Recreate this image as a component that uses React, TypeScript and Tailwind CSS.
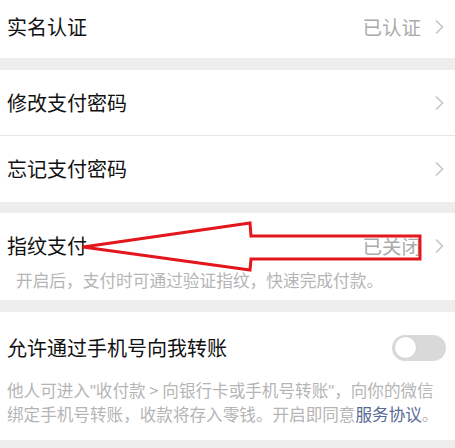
import React from 'react';

const font = { fontFamily: '"Noto Sans CJK SC", "Noto Sans", sans-serif' };
const latin = { fontFamily: '"Liberation Sans", sans-serif' };

function Chevron() {
  return (
    <svg width="10" height="16" viewBox="0 0 10 16" className="ml-[13px] shrink-0">
      <path d="M2 1.5 L8.5 8 L2 14.5" fill="none" stroke="#c4c4c4" strokeWidth="1.5" />
    </svg>
  );
}

function Row({ title, value, height }: { title: string; value?: string; height: string }) {
  return (
    <div className={`flex items-center justify-between bg-white pl-[7px] pr-[11px] ${height}`}>
      <span className="text-[20px] text-[#111111]">{title}</span>
      <div className="flex items-center">
        {value && <span className="text-[19.5px] text-[#ababab]">{value}</span>}
        <Chevron />
      </div>
    </div>
  );
}

export default function App() {
  return (
    <div className="relative w-[455px] h-[448px] overflow-hidden bg-[#ededed]" style={font}>
      <div className="pb-[5px] bg-white">
        <Row title="实名认证" value="已认证" height="h-[53px]" />
      </div>

      <div className="mt-[12px]">
        <Row title="修改支付密码" height="h-[65px]" />
        <div className="h-px bg-[#e6e6e6]" />
        <Row title="忘记支付密码" height="h-[66px]" />
      </div>

      <div className="mt-[11px] h-[87px] bg-white">
        <div className="pt-[1px]">
          <Row title="指纹支付" value="已关闭" height="h-[63px]" />
        </div>
        <p className="-mt-[8px] pl-[16px] text-[16.7px] leading-[22px] text-[#b5b5b5]">
          开启后，支付时可通过验证指纹，快速完成付款。
        </p>
      </div>

      <div className="mt-[12px] h-[128px] bg-white pl-[7px] pr-[9px]">
        <div className="flex h-[68px] items-center justify-between pt-[3px]">
          <span className="text-[20px] text-[#111111]">允许通过手机号向我转账</span>
          <div className="flex h-[26px] w-[54px] items-center rounded-full bg-[#d9d9d9] p-[2px]">
            <div className="h-[23px] w-[23px] rounded-full border border-[#cfcfcf] bg-white" />
          </div>
        </div>
        <p className="-mt-[1px] text-[16.6px] leading-[23px] text-[#b5b5b5] whitespace-nowrap">
          他人可进入<span style={latin}>"</span>收付款 &gt; 向银行卡或手机号转账<span style={latin}>"</span>，向你的微信
          <br />
          绑定手机号转账，收款将存入零钱。开启即同意<span className="text-[#576b95]">服务协议</span>。
        </p>
      </div>

      <svg className="absolute left-0 top-0" width="455" height="448" viewBox="0 0 455 448">
        <polygon
          points="83,247 250,223 251,236 420,236 420,259 251,259 250,270"
          fill="none"
          stroke="#e3161d"
          strokeWidth="3"
          strokeLinejoin="miter"
        />
      </svg>
    </div>
  );
}
